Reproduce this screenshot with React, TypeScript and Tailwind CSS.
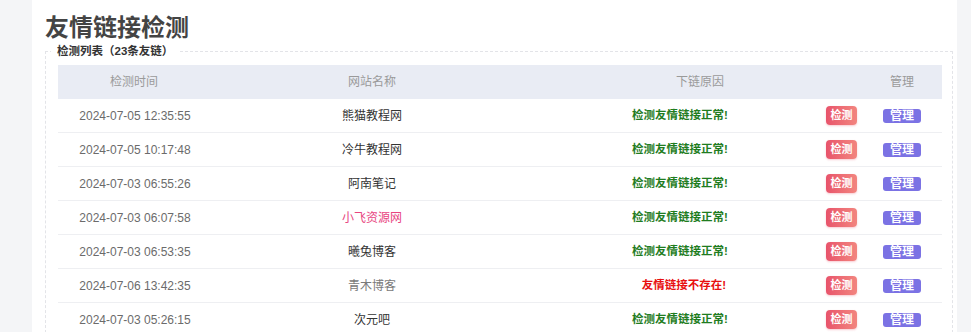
import React from 'react';

type Row = {
  time: string;
  name: string;
  nameTone?: 'pink' | 'muted';
  ok: boolean;
};

const rows: Row[] = [
  { time: '2024-07-05 12:35:55', name: '熊猫教程网', ok: true },
  { time: '2024-07-05 10:17:48', name: '冷牛教程网', ok: true },
  { time: '2024-07-03 06:55:26', name: '阿南笔记', ok: true },
  { time: '2024-07-03 06:07:58', name: '小飞资源网', nameTone: 'pink', ok: true },
  { time: '2024-07-03 06:53:35', name: '曦兔博客', ok: true },
  { time: '2024-07-06 13:42:35', name: '青木博客', nameTone: 'muted', ok: false },
  { time: '2024-07-03 05:26:15', name: '次元吧', ok: true },
];

const font = { fontFamily: '"Liberation Sans", "Noto Sans CJK SC", sans-serif' };

export default function App() {
  return (
    <div className="flex h-[332px] w-full overflow-hidden bg-[#f4f5f7]" style={font}>
      <div className="w-[32px] shrink-0" />
      <main className="w-[925px] shrink-0 bg-white pl-[13px] pr-[4px]">
        <h1 className="mt-[15px] h-[26px] text-[24px] font-bold leading-[26px] text-[#444]">
          友情链接检测
        </h1>

        <fieldset className="mt-[2px] border border-dashed border-[#e3e4e8] pl-[12px] pr-[10px]">
          <legend className="-ml-[7px] px-[6px] text-[11.5px] font-bold leading-[16px] text-[#333]">
            检测列表（23条友链）
          </legend>

          <div className="pt-[6px] text-[12px]">
            <div className="grid h-[34px] grid-cols-[152px_324px_292px_36px_80px] items-center bg-[#e9ecf4] text-center text-[#9a9a9a]">
              <span>检测时间</span>
              <span>网站名称</span>
              <span className="pl-[40px]">下链原因</span>
              <span />
              <span>管理</span>
            </div>

            {rows.map((r) => (
              <div
                key={r.time + r.name}
                className="grid h-[34px] grid-cols-[152px_324px_292px_36px_80px] items-center border-b border-[#eeeff2] text-center"
              >
                <span className="pl-[2px] text-[#6b6b6b]">{r.time}</span>
                <span
                  className={
                    r.nameTone === 'pink'
                      ? 'text-[#e8457f]'
                      : r.nameTone === 'muted'
                        ? 'text-[#7a7a7a]'
                        : 'text-[#333]'
                  }
                >
                  {r.name}
                </span>
                <span
                  className={
                    r.ok
                      ? 'text-[11.5px] font-bold text-[#1f7d1f]'
                      : 'pl-[8px] text-[11.5px] font-bold text-[#e81010]'
                  }
                >
                  {r.ok ? '检测友情链接正常!' : '友情链接不存在!'}
                </span>
                <span className="flex justify-start">
                  <button className="h-[19px] w-[31px] rounded-[4px] bg-gradient-to-r from-[#e8536b] to-[#f2857f] text-[11px] font-semibold leading-[19px] text-white shadow-[0_1px_2px_rgba(232,83,107,0.3)]">
                    检测
                  </button>
                </span>
                <span className="flex justify-center">
                  <button className="h-[14px] w-[38px] rounded-[3px] bg-[#7b72e4] text-[12px] font-bold leading-[14px] text-white">
                    管理
                  </button>
                </span>
              </div>
            ))}
          </div>
        </fieldset>
      </main>
    </div>
  );
}
